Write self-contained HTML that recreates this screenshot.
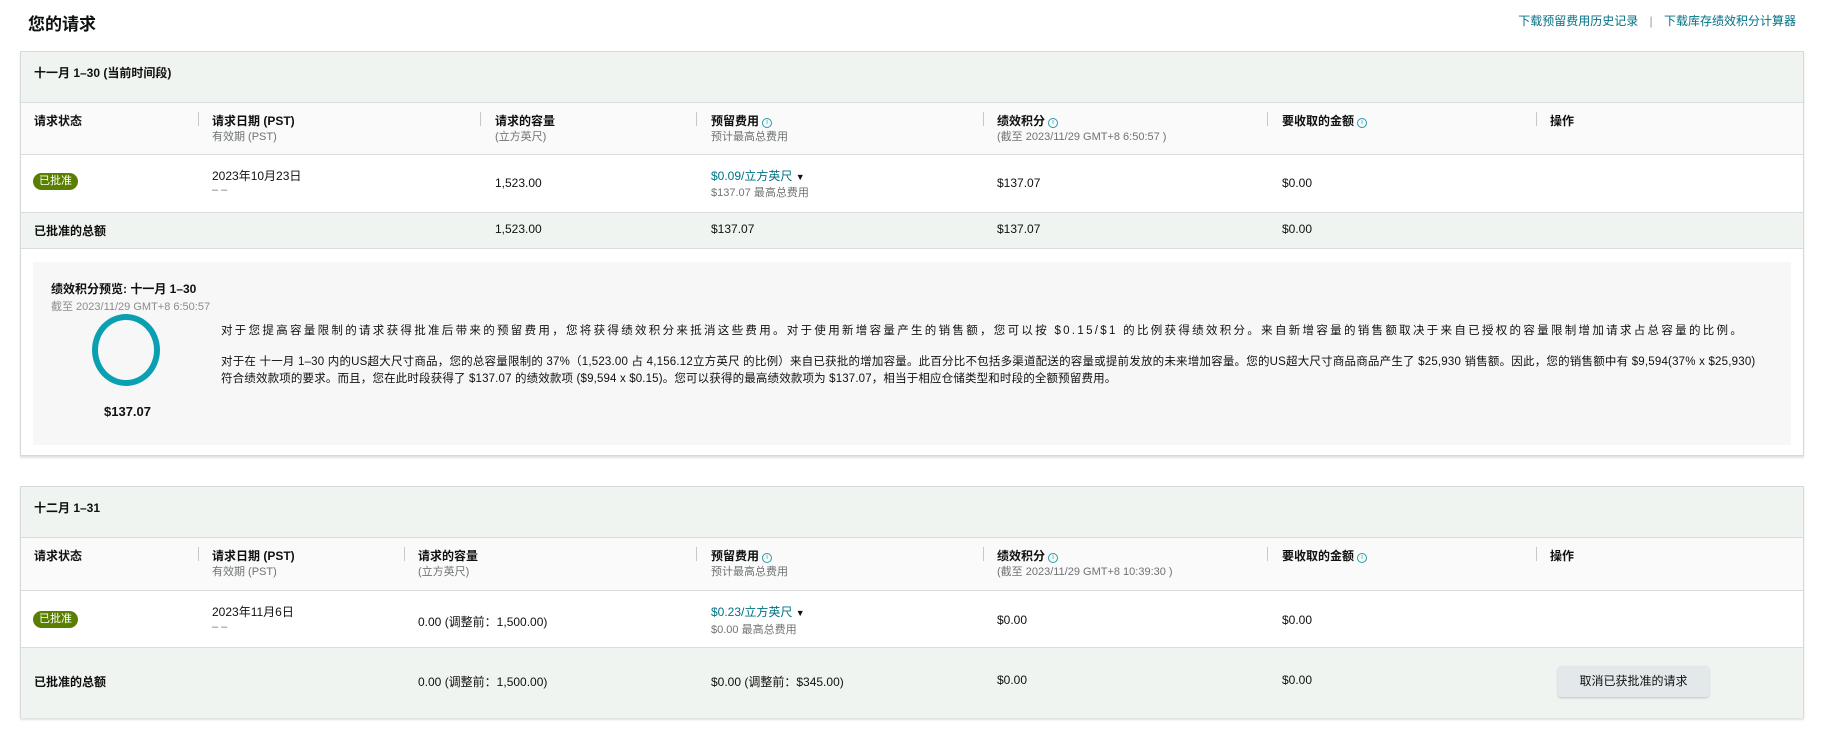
<!DOCTYPE html>
<html><head><meta charset="utf-8"><style>
*{margin:0;padding:0;box-sizing:border-box}
body{width:1826px;height:756px;background:#fff;font-family:"Liberation Sans","Noto Sans CJK SC",sans-serif;font-size:12px;color:#0f1111;position:relative;overflow:hidden}
.a{position:absolute;white-space:nowrap}
.card{position:absolute;left:20px;width:1784px;border:1px solid #d5d9d9;box-shadow:0 2px 2px rgba(0,0,0,.12);background:#fff}
.band{position:absolute;left:0;right:0}
.g{background:#f0f4f0}
.h{background:#fafafa}
.bl{border-top:1px solid #d8dcdc}
.b{font-weight:bold}
.s{color:#6f7373;font-size:11px}
.lk{color:#007185}
.sep{position:absolute;width:1px;height:14px;background:#c6c9c9}
.i{display:inline-block;width:10px;height:10px;border:1px solid #2a9aaa;border-radius:50%;font-size:7px;line-height:8px;text-align:center;color:#2a9aaa;vertical-align:1px;margin-left:3px;font-weight:normal}
.badge{position:absolute;background:#5a7f00;color:#fff;border-radius:9px;font-size:11px;padding:2px 6px;line-height:13px}
.btn{position:absolute;background:#e3e9eb;border-radius:3px;box-shadow:0 1px 2px rgba(0,0,0,.2);text-align:center;line-height:30px}
</style></head><body>
<div class="a b" style="left:28px;top:10px;font-size:17px">您的请求</div>
<div class="a lk" style="right:30px;top:12px;font-size:12px">下载预留费用历史记录 <span style="color:#999;margin:0 8px">|</span> 下载库存绩效积分计算器</div>

<!-- card 1 -->
<div class="card" style="top:51px;height:405px">
 <div class="band g" style="top:0;height:50px"></div>
 <div class="a b" style="left:13px;top:12px;font-size:12px">十一月 1–30 (当前时间段)</div>
 <div class="band h bl" style="top:50px;height:52px"></div>
 <div class="band bl" style="top:102px;height:58px"></div>
 <div class="band g bl" style="top:160px;height:37px;border-bottom:1px solid #d8dcdc"></div>
 <div class="a b" style="left:13px;top:60px">请求状态</div>
 <div class="sep" style="left:177px;top:60px"></div>
 <div class="a b" style="left:191px;top:60px">请求日期 (PST)</div><div class="a s" style="left:191px;top:76px">有效期 (PST)</div>
 <div class="sep" style="left:459px;top:60px"></div>
 <div class="a b" style="left:474px;top:60px">请求的容量</div><div class="a s" style="left:474px;top:76px">(立方英尺)</div>
 <div class="sep" style="left:675px;top:60px"></div>
 <div class="a b" style="left:690px;top:60px">预留费用<span class="i">i</span></div><div class="a s" style="left:690px;top:76px">预计最高总费用</div>
 <div class="sep" style="left:962px;top:60px"></div>
 <div class="a b" style="left:976px;top:60px">绩效积分<span class="i">i</span></div><div class="a s" style="left:976px;top:76px">(截至 2023/11/29 GMT+8 6:50:57 )</div>
 <div class="sep" style="left:1246px;top:60px"></div>
 <div class="a b" style="left:1261px;top:60px">要收取的金额<span class="i">i</span></div>
 <div class="sep" style="left:1515px;top:60px"></div>
 <div class="a b" style="left:1529px;top:60px">操作</div>

 <div class="badge" style="left:12px;top:121px">已批准</div>
 <div class="a" style="left:191px;top:115px">2023年10月23日</div><div class="a s" style="left:191px;top:132px">– –</div>
 <div class="a" style="left:474px;top:124px">1,523.00</div>
 <div class="a lk" style="left:690px;top:115px">$0.09/立方英尺 <span style="color:#0f1111;font-size:9px">▼</span></div><div class="a s" style="left:690px;top:132px">$137.07 最高总费用</div>
 <div class="a" style="left:976px;top:124px">$137.07</div>
 <div class="a" style="left:1261px;top:124px">$0.00</div>

 <div class="a b" style="left:13px;top:170px">已批准的总额</div>
 <div class="a" style="left:474px;top:170px">1,523.00</div>
 <div class="a" style="left:690px;top:170px">$137.07</div>
 <div class="a" style="left:976px;top:170px">$137.07</div>
 <div class="a" style="left:1261px;top:170px">$0.00</div>

 <div style="position:absolute;left:12px;top:210px;width:1758px;height:183px;background:#f7f7f7"></div>
 <div class="a b" style="left:30px;top:228px">绩效积分预览: 十一月 1–30</div>
 <div class="a s" style="left:30px;top:246px;color:#8a8d8d">截至 2023/11/29 GMT+8 6:50:57</div>
 <div style="position:absolute;left:71px;top:262px;width:68px;height:72px;border:6px solid #0aa0b2;border-radius:50%"></div>
 <div class="a b" style="left:83px;top:352px;font-size:13px">$137.07</div>
 <div class="a" style="left:200px;top:270px;font-size:11.5px;letter-spacing:2.3px">对于您提高容量限制的请求获得批准后带来的预留费用，您将获得绩效积分来抵消这些费用。对于使用新增容量产生的销售额，您可以按 $0.15/$1 的比例获得绩效积分。来自新增容量的销售额取决于来自已授权的容量限制增加请求占总容量的比例。</div>
 <div class="a" style="left:200px;top:301px;font-size:11.5px;letter-spacing:0.2px">对于在 十一月 1–30 内的US超大尺寸商品，您的总容量限制的 37%（1,523.00 占 4,156.12立方英尺 的比例）来自已获批的增加容量。此百分比不包括多渠道配送的容量或提前发放的未来增加容量。您的US超大尺寸商品商品产生了 $25,930 销售额。因此，您的销售额中有 $9,594(37% x $25,930)</div>
 <div class="a" style="left:200px;top:318px;font-size:11.5px;letter-spacing:0.15px">符合绩效款项的要求。而且，您在此时段获得了 $137.07 的绩效款项 ($9,594 x $0.15)。您可以获得的最高绩效款项为 $137.07，相当于相应仓储类型和时段的全额预留费用。</div>
</div>

<!-- card 2 -->
<div class="card" style="top:486px;height:232px">
 <div class="band g" style="top:0;height:50px"></div>
 <div class="a b" style="left:13px;top:12px">十二月 1–31</div>
 <div class="band h bl" style="top:50px;height:53px"></div>
 <div class="band bl" style="top:103px;height:57px"></div>
 <div class="band g bl" style="top:160px;height:71px"></div>
 <div class="a b" style="left:13px;top:60px">请求状态</div>
 <div class="sep" style="left:177px;top:60px"></div>
 <div class="a b" style="left:191px;top:60px">请求日期 (PST)</div><div class="a s" style="left:191px;top:76px">有效期 (PST)</div>
 <div class="sep" style="left:383px;top:60px"></div>
 <div class="a b" style="left:397px;top:60px">请求的容量</div><div class="a s" style="left:397px;top:76px">(立方英尺)</div>
 <div class="sep" style="left:675px;top:60px"></div>
 <div class="a b" style="left:690px;top:60px">预留费用<span class="i">i</span></div><div class="a s" style="left:690px;top:76px">预计最高总费用</div>
 <div class="sep" style="left:962px;top:60px"></div>
 <div class="a b" style="left:976px;top:60px">绩效积分<span class="i">i</span></div><div class="a s" style="left:976px;top:76px">(截至 2023/11/29 GMT+8 10:39:30 )</div>
 <div class="sep" style="left:1246px;top:60px"></div>
 <div class="a b" style="left:1261px;top:60px">要收取的金额<span class="i">i</span></div>
 <div class="sep" style="left:1515px;top:60px"></div>
 <div class="a b" style="left:1529px;top:60px">操作</div>

 <div class="badge" style="left:12px;top:124px">已批准</div>
 <div class="a" style="left:191px;top:116px">2023年11月6日</div><div class="a s" style="left:191px;top:134px">– –</div>
 <div class="a" style="left:397px;top:126px">0.00 (调整前：1,500.00)</div>
 <div class="a lk" style="left:690px;top:116px">$0.23/立方英尺 <span style="color:#0f1111;font-size:9px">▼</span></div><div class="a s" style="left:690px;top:134px">$0.00 最高总费用</div>
 <div class="a" style="left:976px;top:126px">$0.00</div>
 <div class="a" style="left:1261px;top:126px">$0.00</div>

 <div class="a b" style="left:13px;top:186px">已批准的总额</div>
 <div class="a" style="left:397px;top:186px">0.00 (调整前：1,500.00)</div>
 <div class="a" style="left:690px;top:186px">$0.00 (调整前：$345.00)</div>
 <div class="a" style="left:976px;top:186px">$0.00</div>
 <div class="a" style="left:1261px;top:186px">$0.00</div>
 <div class="btn" style="left:1537px;top:179px;width:151px;height:31px">取消已获批准的请求</div>
</div>
</body></html>
